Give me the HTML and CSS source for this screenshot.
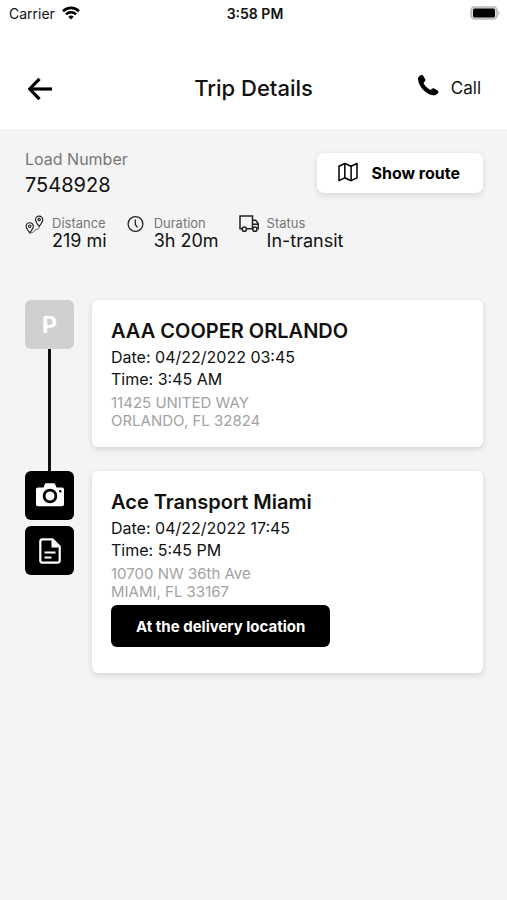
FILE: index.html
```html
<!DOCTYPE html>
<html lang="en">
<head>
  <meta charset="UTF-8">
  <meta name="viewport" content="width=device-width, initial-scale=1.0">
  <title>Trip Details</title>
  <link rel="stylesheet" href="styles.css">
</head>
<body>
  <div class="status-bar">
    <div class="carrier">
      <span>Carrier</span>
      <svg width="18" height="14" viewBox="0 0 18 14" fill="none" stroke="#000" stroke-width="2.6">
        <path d="M1 5.2a11.4 11.4 0 0 1 16 0"/>
        <path d="M3.9 8.4a7.3 7.3 0 0 1 10.2 0"/>
        <path d="M9 13.6l-2.7-2.8a3.9 3.9 0 0 1 5.4 0z" fill="#000" stroke="none"/>
      </svg>
    </div>
    <div class="clock">3:58 PM</div>
    <div class="battery">
      <svg width="31" height="14" viewBox="0 0 31 14">
        <rect x="1" y="1" width="26" height="12" rx="3.5" fill="#ddd" stroke="#b8b8b8" stroke-width="1.6"/>
        <rect x="3" y="2.6" width="22" height="9" rx="1.5" fill="#000"/>
        <path d="M28.4 4.8a2.6 2.6 0 0 1 0 4.4z" fill="#b5b5b5"/>
      </svg>
    </div>
  </div>

  <header class="header">
    <button class="back" aria-label="Back">
      <svg width="26" height="24" viewBox="0 0 26 24" fill="none" stroke="#000" stroke-width="3.2">
        <path d="M26 13H4"/>
        <path d="M13.5 2.8L3.6 13l9.900 10.200" stroke-linejoin="round"/>
      </svg>
    </button>
    <h1>Trip Details</h1>
    <a class="call" href="#call">
      <svg width="22" height="28" viewBox="0 0 22 28">
        <path d="M1 5.2C.9 3.6 2.3 1.7 4 1.1c.9-.3 1.7-.2 2.2.6l2 3.5c.4.8.2 1.7-.5 2.4L6.5 8.9c.8 1.7 1.7 3 2.9 4.2 1.1 1.1 2.5 2.1 4.1 2.9l1.5-1.3c.7-.6 1.6-.7 2.3-.2l3.5 2.2c.8.5.9 1.3.4 2.1-1.1 1.8-2.9 2.8-4.9 2.500C8.900 20.200 1.500 12.600 1 5.200z"/>
      </svg>
      <span>Call</span>
    </a>
  </header>

  <main>
    <section class="summary">
      <div>
        <p class="load-label">Load Number</p>
        <p class="load-number">7548928</p>
      </div>
      <button class="route-btn">
        <svg width="20" height="22" viewBox="0 0 20 22" fill="none" stroke="#000" stroke-width="1.5" stroke-linejoin="round">
          <path d="M1 4.3l5.8-2.8 6.3 2.8L19 1.5v14.3l-5.9 2.9-6.3-2.9L1 18.7z"/>
          <path d="M6.8 1.5v14.3M13.1 4.3v14.3"/>
        </svg>
        Show route
      </button>
    </section>

    <section class="facts">
      <div class="fact">
        <svg width="19" height="20" viewBox="0 0 20 20" fill="none" stroke="#222" stroke-width="1.2">
          <path d="M5 18.3C3 15.7 1.2 13.5 1.2 11.4a3.8 3.8 0 0 1 7.6 0c0 2.1-1.8 4.3-3.8 6.9z"/>
          <circle cx="5" cy="11.3" r="1.3"/>
          <path d="M14.9 11.3c-2-2.6-3.8-4.8-3.8-6.9a3.8 3.8 0 0 1 7.600 0c0 2.100-1.800 4.300-3.800 6.900z"/>
          <circle cx="14.9" cy="4.3" r="1.3"/>
          <path d="M5.5 18.2c4.5.4 3.5-2.8 6.2-3.4 2-.4 3.2-1.300 3.200-3.200" stroke-width="0.8"/>
        </svg>
        <div>
          <p class="fact-label">Distance</p>
          <p class="fact-value">219 mi</p>
        </div>
      </div>
      <div class="fact">
        <svg width="19" height="18" viewBox="0 0 19 18" fill="none" stroke="#222" stroke-width="1.3">
          <circle cx="8.5" cy="9" r="7.4"/>
          <path d="M8.3 4.5v5l2.2 2.8"/>
        </svg>
        <div>
          <p class="fact-label">Duration</p>
          <p class="fact-value">3h 20m</p>
        </div>
      </div>
      <div class="fact">
        <svg width="20" height="18" viewBox="0 0 20 18" fill="none" stroke="#222" stroke-width="1.5">
          <path d="M3 13.7H1V1h12.5v12.7H7.6"/>
          <path d="M13.5 5.2h3.2l2.6 3.7v4.8h-1M13.5 9.3h5.6"/>
          <circle cx="5.3" cy="14.2" r="2.1"/>
          <circle cx="15.9" cy="14.2" r="2.1"/>
        </svg>
        <div>
          <p class="fact-label">Status</p>
          <p class="fact-value">In-transit</p>
        </div>
      </div>
    </section>

    <section class="stops">
      <div class="stop">
        <div class="rail">
          <div class="tile pickup">P</div>
          <div class="line"></div>
        </div>
        <article class="card">
          <h2>AAA COOPER ORLANDO</h2>
          <p class="when">Date: 04/22/2022 03:45</p>
          <p class="when">Time: 3:45 AM</p>
          <p class="address">11425 UNITED WAY<br>ORLANDO, FL 32824</p>
        </article>
      </div>

      <div class="stop">
        <div class="rail">
          <button class="tile" aria-label="Take photo">
            <svg width="28" height="26" viewBox="0 0 28 26">
              <path d="M2 4.5h5.5l1.3-3.2c.3-.8.8-1.1 1.5-1.1h7.4c.7 0 1.2.3 1.5 1.1l1.3 3.2H26c1.2 0 2 .8 2 2v14.8c0 1.2-.8 2-2 2H2c-1.2 0-2-.8-2-2V6.500c0-1.200.8-2 2-2z" fill="#fff"/>
              <circle cx="14" cy="13" r="5.9" fill="none" stroke="#000" stroke-width="2.8"/>
              <circle cx="24.3" cy="8.2" r="1.2" fill="#000"/>
            </svg>
          </button>
          <button class="tile" aria-label="Documents">
            <svg width="22" height="26" viewBox="0 0 22 26" fill="none" stroke="#fff" stroke-width="2.2">
              <path d="M3.6 1.3h9.9l7.2 7.2v13.9c0 1.3-.9 2.2-2.2 2.2h-15c-1.3 0-2.2-.9-2.2-2.2V3.5c0-1.3.9-2.200 2.300-2.200z"/>
              <path d="M12.5 1.3l8.2 8.2h-8.2z" fill="#fff" stroke="none"/>
              <path d="M5.5 14.5h11M5.5 19.5h7"/>
            </svg>
          </button>
        </div>
        <article class="card">
          <h2>Ace Transport Miami</h2>
          <p class="when">Date: 04/22/2022 17:45</p>
          <p class="when">Time: 5:45 PM</p>
          <p class="address">10700 NW 36th Ave<br>MIAMI, FL 33167</p>
          <button class="arrive-btn">At the delivery location</button>
        </article>
      </div>
    </section>
  </main>
</body>
</html>
```

FILE: styles.css
```css
* {
  box-sizing: border-box;
}
body {
  font-family: Inter, "Liberation Sans", sans-serif;
  margin: 0;
  background-color: #f4f4f4;
  color: #111;
}
h1, h2, p {
  margin: 0;
}
svg {
  display: block;
  flex-shrink: 0;
}
button {
  font-family: inherit;
  border: none;
  padding: 0;
  cursor: pointer;
}

/* status bar */
.status-bar {
  display: grid;
  grid-template-columns: 1fr auto 1fr;
  align-items: center;
  height: 26px;
  padding: 0 6px 0 9px;
  background: white;
  font-size: 14px;
}
.carrier {
  display: flex;
  align-items: center;
  gap: 7px;
}
.clock {
  font-weight: 600;
}
.battery {
  display: flex;
  justify-content: flex-end;
}

/* header */
.header {
  display: grid;
  grid-template-columns: 1fr auto 1fr;
  align-items: center;
  height: 103px;
  padding: 20px 26px 0;
  background: white;
}
.back {
  justify-self: start;
  background: none;
}
.header h1 {
  font-size: 22px;
  font-weight: 500;
}
.call {
  display: flex;
  align-items: center;
  justify-self: end;
  gap: 12px;
  font-size: 17px;
  color: #111;
  text-decoration: none;
}

main {
  padding: 20px 24px 24px 25px;
}

/* load number and route */
.summary {
  display: flex;
  justify-content: space-between;
  align-items: flex-start;
}
.load-label {
  font-size: 16px;
  line-height: 20px;
  color: #777;
}
.load-number {
  font-size: 20px;
  line-height: 32px;
}
.route-btn {
  display: flex;
  align-items: center;
  gap: 13px;
  height: 40px;
  margin-top: 4px;
  padding: 0 23px 0 21px;
  border-radius: 7px;
  background: white;
  color: #000;
  font-size: 16px;
  font-weight: 700;
  box-shadow: 0 2px 6px rgba(0,0,0,0.12);
}

.facts {
  display: flex;
  gap: 20px;
  margin-top: 14px;
}
.fact {
  display: flex;
  gap: 8px;
}
.fact-label {
  font-size: 13px;
  line-height: 16px;
  color: #777;
}
.fact-value {
  font-size: 18px;
  line-height: 20px;
}

/* stops */
.stops {
  margin-top: 49px;
}
.stop {
  display: flex;
  gap: 18px;
}
.rail {
  display: flex;
  flex-direction: column;
  align-items: center;
  width: 49px;
}
.tile {
  display: flex;
  align-items: center;
  justify-content: center;
  width: 49px;
  height: 49px;
  margin-bottom: 6px;
  border-radius: 6px;
  background: #000;
  color: white;
}
.pickup {
  margin-bottom: 0;
  background: #d0d0d0;
  font-size: 23px;
  font-weight: 700;
}
.line {
  flex: 1;
  width: 3px;
  background: #111;
}
.card {
  flex: 1;
  margin-bottom: 24px;
  padding: 19px 19px 17px;
  border-radius: 6px;
  background: white;
  box-shadow: 0 2px 6px rgba(0,0,0,0.14);
}
.card h2 {
  font-size: 20px;
  font-weight: 600;
  line-height: 24px;
  margin-bottom: 3px;
}
.when {
  font-size: 16px;
  line-height: 22px;
}
.address {
  margin-top: 4px;
  font-size: 15px;
  line-height: 18px;
  color: #a2a2a2;
}
.arrive-btn {
  height: 42px;
  margin: 4px 0 9px;
  padding: 0 25px;
  border-radius: 6px;
  background: #000;
  color: white;
  font-size: 15px;
  font-weight: 700;
}
```
